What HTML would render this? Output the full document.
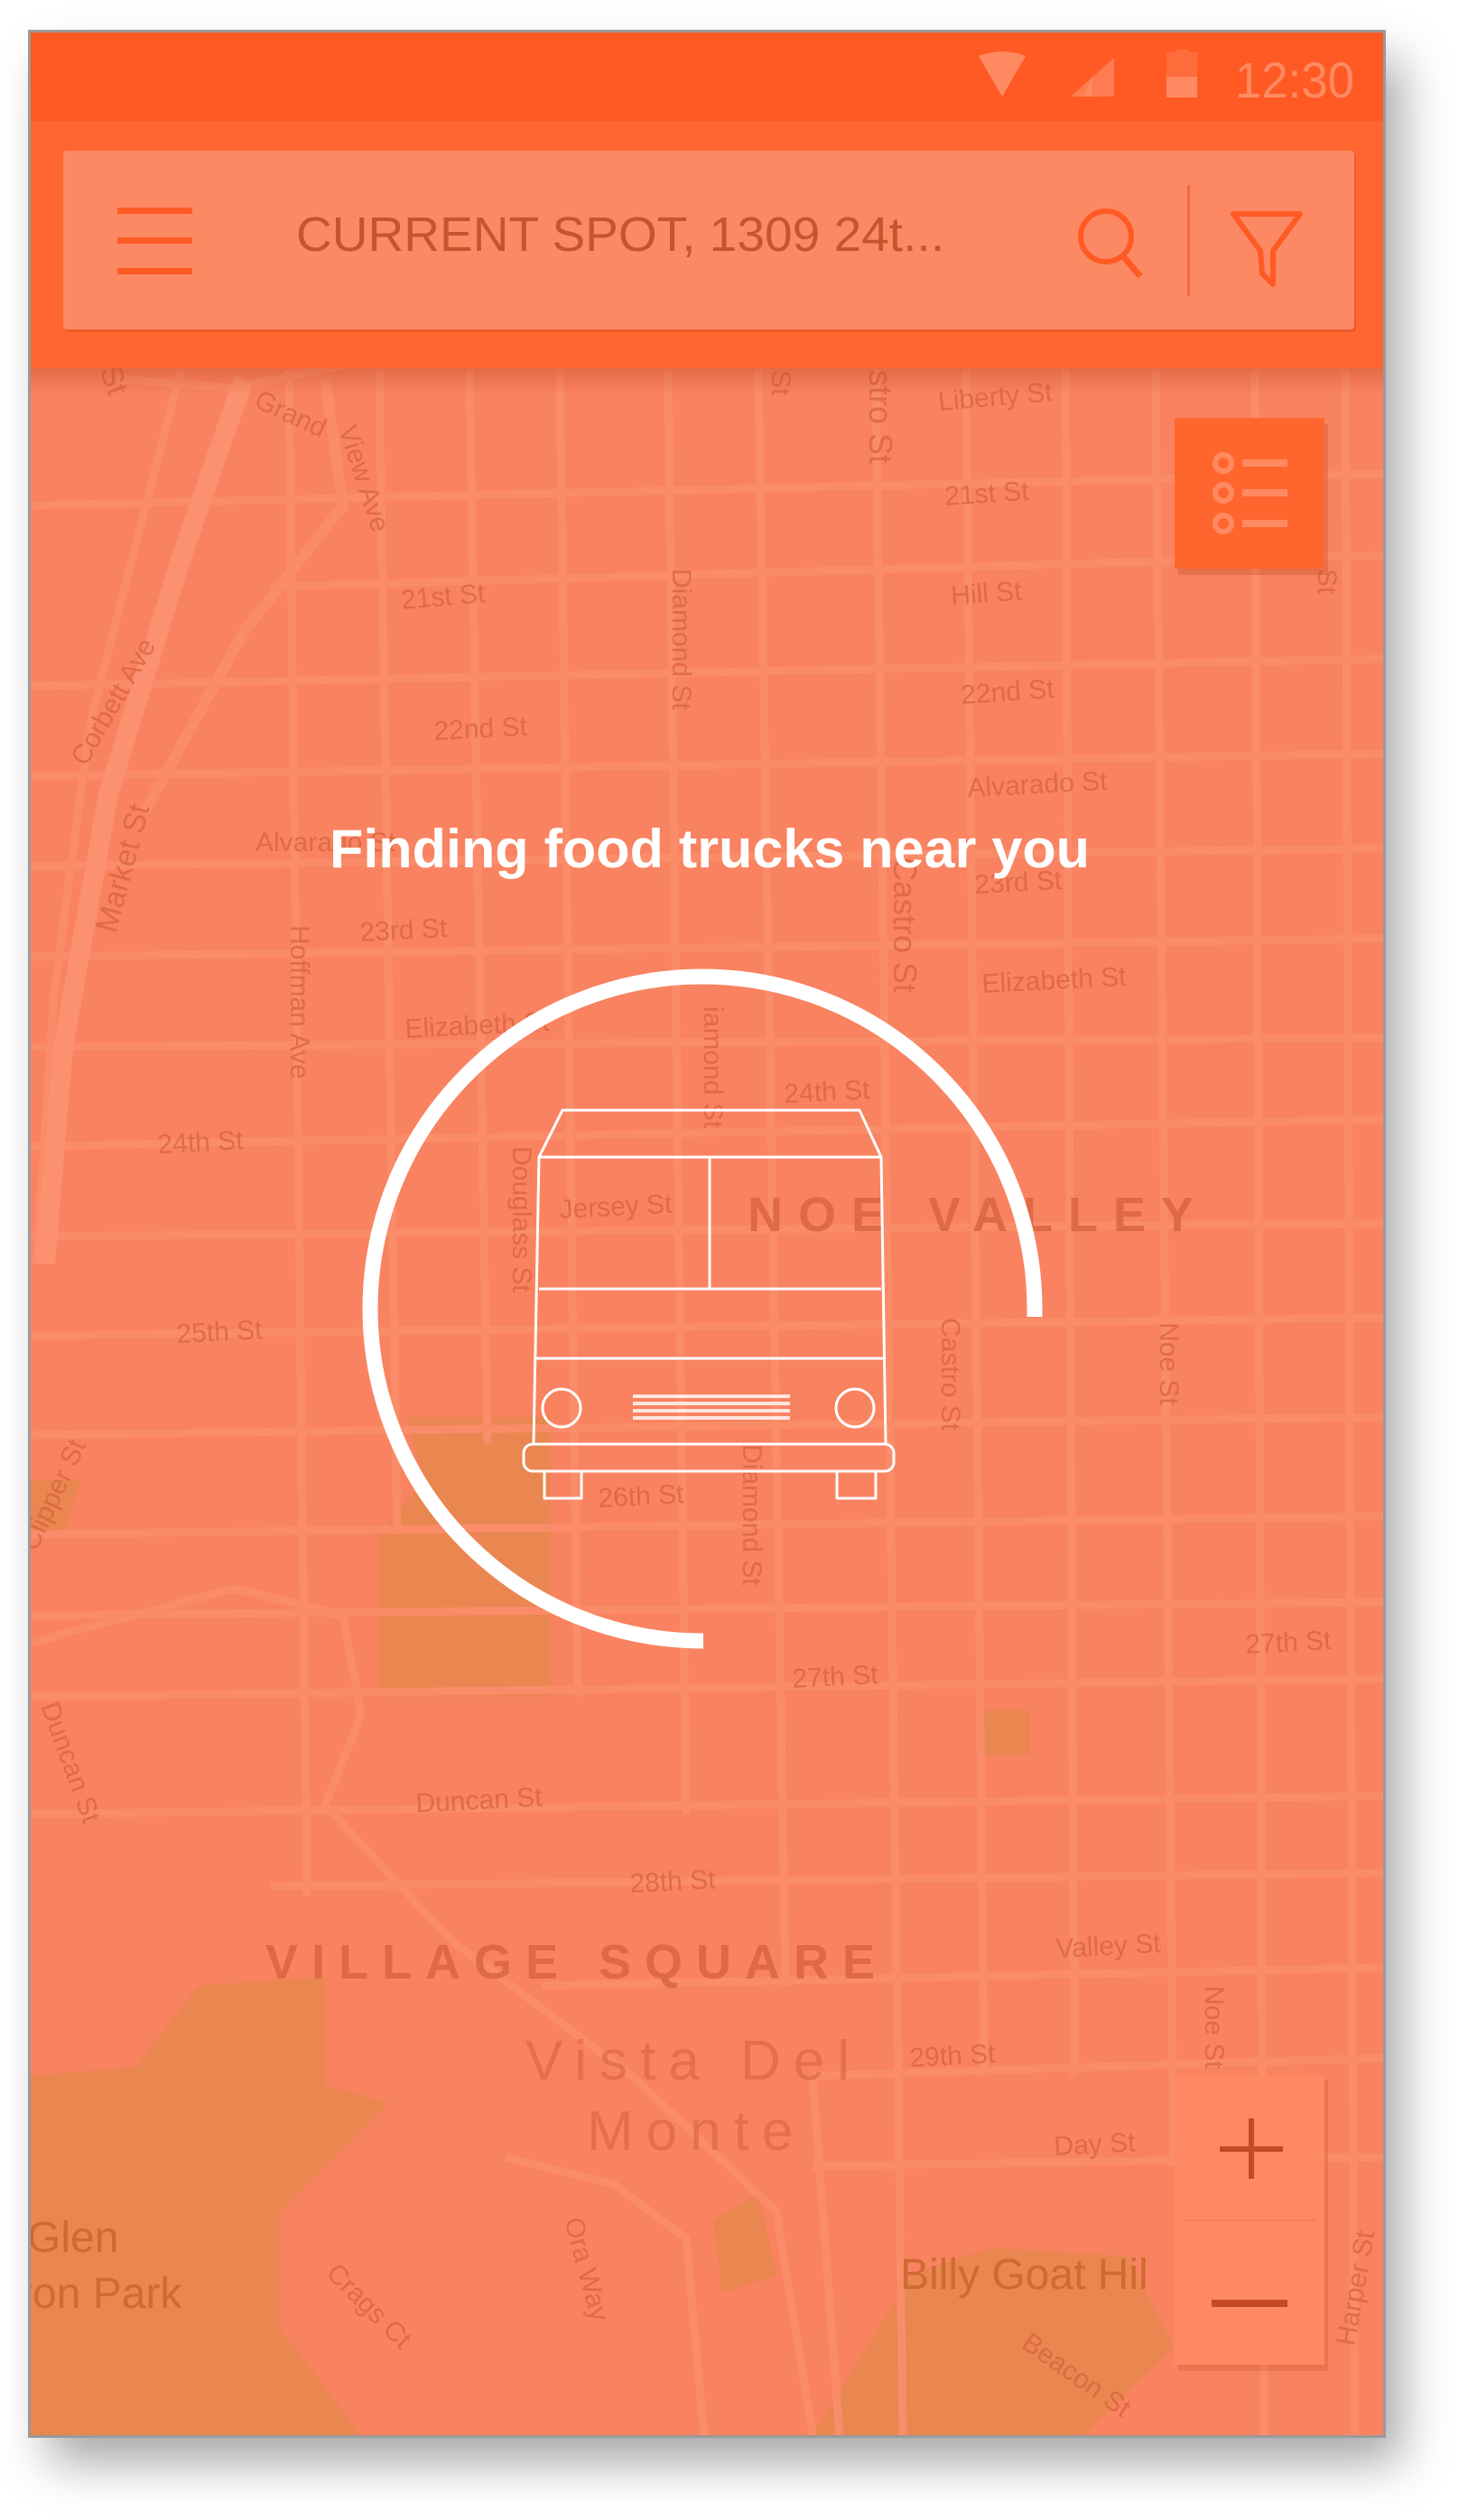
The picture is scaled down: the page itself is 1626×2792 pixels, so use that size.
<!DOCTYPE html>
<html><head><meta charset="utf-8"><style>
html,body{margin:0;padding:0;background:#fff;}
body{width:1626px;height:2792px;position:relative;overflow:hidden;font-family:"Liberation Sans",sans-serif;}
#phone{position:absolute;left:34px;top:36px;width:1498px;height:2662px;box-shadow:0 0 0 3px #9a9a9a,20px 30px 50px rgba(0,0,0,0.35);background:#f98260;overflow:hidden;}
svg{position:absolute;left:0;top:0;}
</style></head><body>
<div id="phone">
<svg width="1498" height="2662" viewBox="34 36 1498 2662">
<rect x="34" y="36" width="1498" height="2662" fill="#f98260"/>
<!-- parks -->
<path d="M450 1570 L610 1570 L610 1880 L420 1880 L420 1700 L470 1640 Z" fill="#ea8650"/>
<path d="M34 2300 L150 2290 L220 2200 L360 2190 L360 2310 L430 2330 L310 2450 L310 2580 L400 2698 L34 2698 Z" fill="#ea8650"/>
<path d="M1090 1895 L1140 1895 L1140 1945 L1090 1945 Z" fill="#ea8650"/>
<path d="M790 2460 L840 2430 L860 2520 L800 2540 Z" fill="#ea8650"/>
<path d="M1010 2520 L1100 2490 L1250 2500 L1300 2600 L1200 2698 L900 2698 Z" fill="#ea8650"/>
<path d="M34 1640 L90 1640 L70 1700 L34 1700 Z" fill="#ea8650"/>
<!-- streets -->
<g stroke="#fa8c69" stroke-width="9" fill="none">
<path d="M130 420 L260 430 L400 400 L1532 360"/>
<path d="M34 560 L1532 525"/>
<path d="M300 650 L1532 615"/>
<path d="M34 760 L1532 730"/>
<path d="M34 860 L1532 835"/>
<path d="M34 960 L1532 940"/>
<path d="M34 1060 L1532 1040"/>
<path d="M34 1160 L1532 1150"/>
<path d="M34 1270 L1532 1240"/>
<path d="M34 1370 L1532 1355"/>
<path d="M34 1480 L1532 1460"/>
<path d="M34 1590 L1532 1570"/>
<path d="M34 1700 L1532 1680"/>
<path d="M34 1790 L1532 1775"/>
<path d="M34 1880 L1532 1860"/>
<path d="M34 2010 L1532 1990"/>
<path d="M300 2090 L1532 2075"/>
<path d="M600 2200 L1532 2180"/>
<path d="M900 2300 L1532 2280"/>
<path d="M900 2400 L1532 2390"/>
<path d="M320 410 L340 2100"/>
<path d="M420 410 L440 1700"/>
<path d="M520 410 L540 1600"/>
<path d="M620 410 L640 1880"/>
<path d="M740 410 L760 2010"/>
<path d="M840 410 L870 2200"/>
<path d="M970 410 L1000 2698"/>
<path d="M1070 410 L1090 2300"/>
<path d="M1180 410 L1190 2300"/>
<path d="M1280 410 L1300 2400"/>
<path d="M1390 410 L1400 2698"/>
<path d="M1490 410 L1500 2698"/>
<path d="M200 410 L100 800 L60 1100 L40 1400"/>
<path d="M34 1820 L260 1760 L380 1790 L400 1900 L360 2000 L500 2150 L700 2300 L860 2450 L900 2698"/>
<path d="M900 2300 L930 2698"/>
<path d="M560 2390 L680 2420 L760 2480 L780 2698"/>
</g>
<path d="M270 420 L200 620 L120 880 L70 1160 L50 1400" stroke="#fb9170" stroke-width="22" fill="none"/>
<path d="M360 420 L380 560 L270 700 L160 900" stroke="#fa8c69" stroke-width="12" fill="none"/>
<!-- labels -->
<g fill="#d8623e" fill-opacity="0.75" font-family="Liberation Sans,sans-serif" font-size="30">
<text x="1040" y="455" transform="rotate(-5 1040 455)">Liberty St</text>
<text x="1047" y="560" transform="rotate(-4 1047 560)">21st St</text>
<text x="1054" y="670" transform="rotate(-4 1054 670)">Hill St</text>
<text x="1065" y="780" transform="rotate(-4 1065 780)">22nd St</text>
<text x="1072" y="883" transform="rotate(-3 1072 883)">Alvarado St</text>
<text x="1080" y="990" transform="rotate(-3 1080 990)">23rd St</text>
<text x="1088" y="1100" transform="rotate(-3 1088 1100)">Elizabeth St</text>
<text x="869" y="1222" transform="rotate(-3 869 1222)">24th St</text>
<text x="620" y="1350" transform="rotate(-3 620 1350)">Jersey St</text>
<text x="196" y="1488" transform="rotate(-3 196 1488)">25th St</text>
<text x="175" y="1278" transform="rotate(-3 175 1278)">24th St</text>
<text x="399" y="1043" transform="rotate(-3 399 1043)">23rd St</text>
<text x="449" y="1150" transform="rotate(-3 449 1150)">Elizabeth St</text>
<text x="481" y="820" transform="rotate(-3 481 820)">22nd St</text>
<text x="445" y="675" transform="rotate(-5 445 675)">21st St</text>
<text x="283" y="943">Alvarado St</text>
<text x="663" y="1670" transform="rotate(-3 663 1670)">26th St</text>
<text x="878" y="1870" transform="rotate(-3 878 1870)">27th St</text>
<text x="1380" y="1832" transform="rotate(-3 1380 1832)">27th St</text>
<text x="461" y="2008" transform="rotate(-3 461 2008)">Duncan St</text>
<text x="698" y="2097" transform="rotate(-3 698 2097)">28th St</text>
<text x="1170" y="2169" transform="rotate(-3 1170 2169)">Valley St</text>
<text x="1008" y="2290" transform="rotate(-3 1008 2290)">29th St</text>
<text x="1168" y="2388" transform="rotate(-3 1168 2388)">Day St</text>
<text x="280" y="450" transform="rotate(25 280 450)">Grand</text>
<text x="375" y="475" transform="rotate(72 375 475)">View Ave</text>
<text x="95" y="850" transform="rotate(-60 95 850)">Corbett Ave</text>
<text x="128" y="1035" transform="rotate(-75 128 1035)" font-size="34">Market St</text>
<text x="322" y="1025" transform="rotate(90 322 1025)">Hoffman Ave</text>
<text x="745" y="630" transform="rotate(90 745 630)">Diamond St</text>
<text x="990" y="950" transform="rotate(90 990 950)" font-size="36">Castro St</text>
<text x="963" y="410" transform="rotate(90 963 410)" font-size="36">stro St</text>
<text x="855" y="410" transform="rotate(90 855 410)">St</text>
<text x="110" y="410" transform="rotate(70 110 410)" font-size="34">St</text>
<text x="568" y="1270" transform="rotate(90 568 1270)">Douglass St</text>
<text x="1043" y="1460" transform="rotate(90 1043 1460)">Castro St</text>
<text x="1285" y="1465" transform="rotate(90 1285 1465)">Noe St</text>
<text x="823" y="1600" transform="rotate(90 823 1600)">Diamond St</text>
<text x="780" y="1115" transform="rotate(90 780 1115)">iamond St</text>
<text x="40" y="1720" transform="rotate(-65 40 1720)">Clipper St</text>
<text x="45" y="1890" transform="rotate(70 45 1890)">Duncan St</text>
<text x="360" y="2520" transform="rotate(45 360 2520)">Crags Ct</text>
<text x="625" y="2460" transform="rotate(75 625 2460)">Ora Way</text>
<text x="1130" y="2600" transform="rotate(35 1130 2600)">Beacon St</text>
<text x="1500" y="2600" transform="rotate(-80 1500 2600)">Harper St</text>
<text x="1460" y="630" transform="rotate(90 1460 630)">St</text>
<text x="1335" y="2200" transform="rotate(90 1335 2200)">Noe St</text>
</g>
<g fill="#d8623e" fill-opacity="0.8" font-family="Liberation Sans,sans-serif" font-weight="bold" font-size="54">
<text x="828" y="1364" letter-spacing="17">NOE VALLEY</text>
<text x="294" y="2192" letter-spacing="15">VILLAGE SQUARE</text>
</g>
<g fill="#d8623e" fill-opacity="0.6" font-family="Liberation Sans,sans-serif" font-size="62">
<text x="582" y="2304" letter-spacing="14">Vista Del</text>
<text x="650" y="2382" letter-spacing="14">Monte</text>
</g>
<g fill="#c8662a" fill-opacity="0.85" font-family="Liberation Sans,sans-serif" font-size="48">
<text x="30" y="2495">Glen</text>
<text x="20" y="2557">ron Park</text>
<text x="997" y="2536">Billy Goat Hil</text>
</g>
<defs><linearGradient id="sh" x1="0" y1="0" x2="0" y2="1"><stop offset="0" stop-color="#c0401a" stop-opacity="0.35"/><stop offset="1" stop-color="#c0401a" stop-opacity="0"/></linearGradient></defs>
<rect x="34" y="408" width="1498" height="30" fill="url(#sh)"/>
<!-- status bar / toolbar -->
<rect x="34" y="36" width="1498" height="98" fill="#ff5a24"/>
<rect x="34" y="134" width="1498" height="274" fill="#ff6630"/>
<rect x="72" y="170" width="1430" height="198" rx="4" fill="#b03a10" opacity="0.25"/>
<rect x="70" y="167" width="1430" height="198" rx="4" fill="#fd8964"/>
<!-- status icons -->
<path d="M1084 62 Q1110 52 1136 62 L1110 107 Z" fill="#ff8a62"/>
<path d="M1234 64 L1234 107 L1186 107 Z" fill="#ff7c50"/>
<path d="M1210 84 L1210 107 L1200 107 Z" fill="#ff8a62"/>
<rect x="1292" y="58" width="34" height="50" fill="#ff6c3c"/>
<rect x="1302" y="55" width="14" height="4" fill="#ff6c3c"/>
<rect x="1292" y="85" width="34" height="23" fill="#ff8a62"/>
<text x="1368" y="108" font-family="Liberation Sans,sans-serif" font-size="56" fill="#ff8a62" textLength="132" lengthAdjust="spacingAndGlyphs">12:30</text>
<!-- hamburger -->
<g fill="#ff5a24"><rect x="130" y="230" width="83" height="7"/><rect x="130" y="263" width="83" height="7"/><rect x="130" y="297" width="83" height="7"/></g>
<text x="328" y="278" font-family="Liberation Sans,sans-serif" font-size="54" fill="#c5552f" textLength="718" lengthAdjust="spacingAndGlyphs">CURRENT SPOT, 1309 24t...</text>
<!-- search -->
<circle cx="1225" cy="262" r="28" stroke="#ff5a24" stroke-width="6" fill="none"/>
<path d="M1244 284 L1263 306" stroke="#ff5a24" stroke-width="7"/>
<rect x="1315" y="205" width="3" height="123" fill="#ee6a40"/>
<path d="M1366 237 L1440 237 L1410 278 L1410 315 L1398 303 L1396 278 Z" stroke="#ff5a24" stroke-width="6" fill="none" stroke-linejoin="round"/>
<!-- list button -->
<rect x="1305" y="470" width="166" height="167" fill="#b03a10" opacity="0.25"/>
<rect x="1301" y="463" width="166" height="167" fill="#ff662e"/>
<g stroke="#ff8a62" stroke-width="6" fill="none"><circle cx="1355" cy="513" r="9"/><circle cx="1355" cy="546" r="9"/><circle cx="1355" cy="580" r="9"/></g>
<g fill="#ff8a62"><rect x="1376" y="509" width="50" height="8"/><rect x="1376" y="542" width="50" height="8"/><rect x="1376" y="576" width="50" height="8"/></g>
<!-- loader -->
<text x="786" y="961" text-anchor="middle" font-family="Liberation Sans,sans-serif" font-weight="bold" font-size="60" fill="#fff" textLength="842" lengthAdjust="spacingAndGlyphs">Finding food trucks near you</text>
<path d="M779 1818 A368 368 0 1 1 1146 1450 L1146 1459" stroke="#fff" stroke-width="17" fill="none"/>
<g stroke="#fff" stroke-width="3" fill="none" stroke-linejoin="round">
<path d="M623 1230 L952 1230 L976 1282 L981 1600 L591 1600 L597 1282 Z"/>
<path d="M597 1282 L976 1282"/>
<path d="M597 1428 L976 1428"/>
<path d="M786 1282 L786 1428"/>
<path d="M594 1505 L979 1505"/>
<circle cx="622" cy="1560" r="21"/><circle cx="947" cy="1560" r="21"/>
<rect x="580" y="1600" width="410" height="30" rx="10"/>
<path d="M603 1630 L603 1660 L644 1660 L644 1630"/>
<path d="M927 1630 L927 1660 L970 1660 L970 1630"/>
</g>
<g fill="#fff" opacity="0.8"><rect x="701" y="1545" width="174" height="4"/><rect x="701" y="1553" width="174" height="4"/><rect x="701" y="1561" width="174" height="4"/><rect x="701" y="1569" width="174" height="4"/></g>
<!-- zoom controls -->
<rect x="1305" y="2305" width="166" height="322" fill="#b03a10" opacity="0.2"/>
<rect x="1301" y="2299" width="166" height="321" fill="#ff8963"/>
<rect x="1310" y="2459" width="148" height="2" fill="#f47e58"/>
<rect x="1351" y="2378" width="70" height="6" fill="#c64a24"/>
<rect x="1383" y="2347" width="6" height="67" fill="#c64a24"/>
<rect x="1342" y="2548" width="84" height="8" fill="#c64a24"/>
</svg>
</div>
</body></html>
